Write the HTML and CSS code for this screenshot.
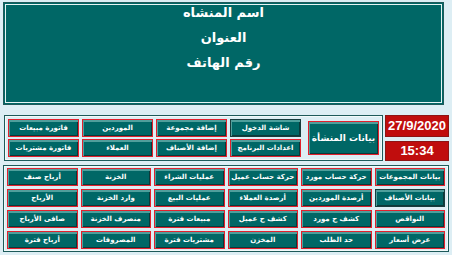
FILE: index.html
```html
<!DOCTYPE html>
<html lang="ar">
<head>
    <meta charset="utf-8">
    <link rel="stylesheet" href="styles.css">
</head>
<body>
    <div class="page">
        <div class="header">
            <div class="header-line">اسم المنشاه</div>
            <div class="header-line">العنوان</div>
            <div class="header-line">رقم الهاتف</div>
        </div>

        <div class="top-row">
            <div class="clock">
                <div class="clock-box date">27/9/2020</div>
                <div class="clock-box time">15:34</div>
            </div>
            <div class="group main-group">
                <button class="btn big-btn">بيانات المنشأة</button>
                <button class="btn plain">شاشة الدخول</button>
                <button class="btn">إضافة مجموعة</button>
                <button class="btn">الموردين</button>
                <button class="btn">فاتورة مبيعات</button>
                <button class="btn">اعدادات البرنامج</button>
                <button class="btn">إضافة الأصناف</button>
                <button class="btn">العملاء</button>
                <button class="btn">فاتورة مشتريات</button>
            </div>
        </div>

        <div class="group reports">
            <button class="btn">بيانات المجموعات</button>
            <button class="btn">حركة حساب مورد</button>
            <button class="btn">حركة حساب عميل</button>
            <button class="btn">عمليات الشراء</button>
            <button class="btn">الخزنة</button>
            <button class="btn">أرباح صنف</button>

            <button class="btn plain">بيانات الأصناف</button>
            <button class="btn">أرصدة الموردين</button>
            <button class="btn">أرصدة العملاء</button>
            <button class="btn">عمليات البيع</button>
            <button class="btn">وارد الخزنة</button>
            <button class="btn">الأرباح</button>

            <button class="btn">النواقص</button>
            <button class="btn">كشف ح مورد</button>
            <button class="btn">كشف ح عميل</button>
            <button class="btn">مبيعات فترة</button>
            <button class="btn">منصرف الخزنة</button>
            <button class="btn">صافى الأرباح</button>

            <button class="btn">عرض أسعار</button>
            <button class="btn">حد الطلب</button>
            <button class="btn">المخزن</button>
            <button class="btn">مشتريات فترة</button>
            <button class="btn">المصروفات</button>
            <button class="btn">أرباح فترة</button>
        </div>
    </div>
</body>
</html>
```

FILE: styles.css
```css
body {
    margin: 0;
    padding: 0;
    background-color: #DDEEF4;
    font-family: 'DejaVu Sans', sans-serif;
}
.page {
    width: 446px;
    padding: 2px 0 0 3px;
    display: flex;
    flex-direction: column;
}
.header {
    width: 437px;
    height: 101px;
    background-color: #006766;
    border: 1px solid #1E5A5A;
    box-shadow: inset 0 0 0 1px #006766, inset 0 0 0 2px #E6F4F4;
    color: #FFF;
    text-align: center;
    direction: rtl;
    padding: 0 1px;
}
.header-line {
    font-size: 13px;
    font-weight: bold;
    line-height: 25px;
}
.header-line:first-child {
    margin-top: -3px;
}
.top-row {
    display: flex;
    direction: rtl;
    gap: 2px;
    margin-top: 10px;
}
.clock {
    display: flex;
    flex-direction: column;
    gap: 4px;
    width: 64px;
}
.clock-box {
    background-color: #C00D0D;
    border: 1px solid #8E1414;
    color: #FFF;
    font-family: 'Liberation Sans', sans-serif;
    font-weight: bold;
    font-size: 13px;
    text-align: center;
    direction: ltr;
}
.date {
    height: 20px;
    line-height: 20px;
}
.time {
    height: 18px;
    line-height: 18px;
}
.group {
    border: 1px solid #1E5A5A;
    box-shadow: inset 0 0 0 1px #F2FAFA;
    direction: rtl;
    display: grid;
}
.main-group {
    width: 371px;
    padding: 3px;
    grid-template-columns: 75px repeat(4, 71px);
    grid-template-rows: 18px 18px;
    column-gap: 3px;
    row-gap: 2px;
}
.reports {
    margin-top: 4px;
    width: 438px;
    padding: 2px 3px;
    grid-template-columns: repeat(6, 1fr);
    grid-template-rows: repeat(4, 18px);
    gap: 3px;
}
.btn {
    margin: 0;
    padding: 0;
    min-width: 0;
    background-color: #006766;
    border: 1px solid #E2202C;
    box-shadow: inset 1px 2px 0 #4F9F9C, inset -1px -1px 0 #0B3A3A;
    color: #FFF;
    font-family: 'DejaVu Sans', sans-serif;
    font-size: 7px;
    font-weight: bold;
    white-space: nowrap;
    overflow: hidden;
    direction: rtl;
}
.btn.plain {
    border-color: #173C3C;
}
.btn.big-btn {
    grid-row: span 2;
    margin: 2px 0 2px 4px;
    font-size: 9px;
}
```
